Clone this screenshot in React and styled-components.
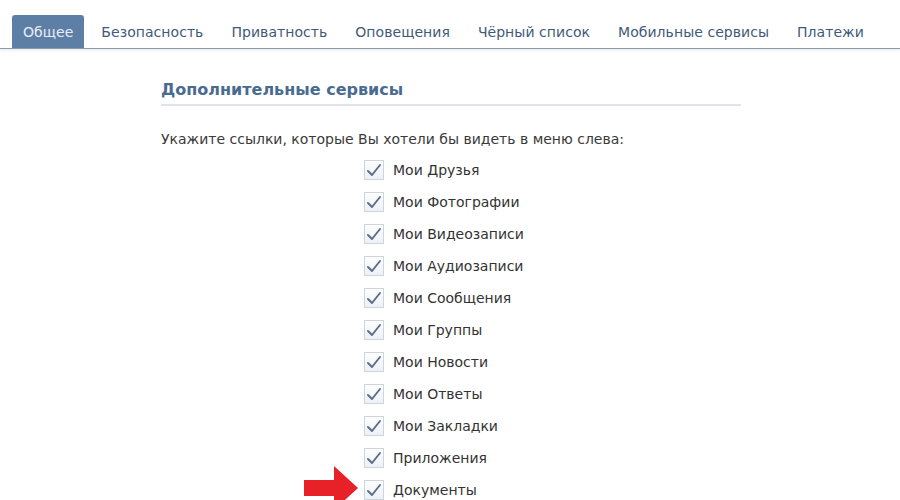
import React from "react";
import styled, { createGlobalStyle } from "styled-components";

const GlobalStyle = createGlobalStyle`
  body {
    margin: 0;
    background: #fff;
    font-family: "DejaVu Sans", Tahoma, sans-serif;
    overflow: hidden;
  }
`;

const Page = styled.div`
  width: 900px;
  height: 500px;
  overflow: hidden;
  background: #fff;
`;

const TabBar = styled.div`
  display: flex;
  align-items: flex-end;
  padding: 15px 0 0 12px;
  border-bottom: 1px solid #8c99a8;
  box-shadow: 0 2px 2px #eef0f2;
`;

const Tab = styled.div`
  height: 33px;
  display: flex;
  align-items: center;
  padding: 0 ${props => (props.active ? "11px" : "14px")};
  margin-right: ${props => (props.active ? "3px" : "0")};
  font-size: 14px;
  letter-spacing: 0.05px;
  color: ${props => (props.active ? "#e8eef5" : "#3f5a78")};
  background: ${props => (props.active ? "#5d7fa5" : "transparent")};
  border-radius: 3px 3px 0 0;
`;

const Content = styled.div`
  width: 580px;
  margin-left: 161px;
  padding-top: 31px;
`;

const Heading = styled.div`
  font-size: 16px;
  font-weight: bold;
  color: #4a6b90;
  padding-bottom: 5px;
  border-bottom: 2px solid #dfe4ea;
`;

const Hint = styled.div`
  margin-top: 25px;
  font-size: 14px;
  color: #3a3a3a;
`;

const List = styled.div`
  display: flex;
  flex-direction: column;
  margin-top: 7px;
  margin-left: 203px;
`;

const Row = styled.div`
  position: relative;
  display: flex;
  align-items: center;
  height: 32px;
  font-size: 14px;
  color: #333;
`;

const Box = styled.div`
  width: 18px;
  height: 18px;
  border: 1px solid #ccd4dc;
  background: linear-gradient(#fdfdfd, #eef1f4);
  margin-right: 9px;
  display: flex;
  align-items: center;
  justify-content: center;
`;

const Arrow = styled.svg`
  position: absolute;
  left: -60px;
  top: -8px;
`;

const tabs = [
  "Общее",
  "Безопасность",
  "Приватность",
  "Оповещения",
  "Чёрный список",
  "Мобильные сервисы",
  "Платежи",
];

const items = [
  "Мои Друзья",
  "Мои Фотографии",
  "Мои Видеозаписи",
  "Мои Аудиозаписи",
  "Мои Сообщения",
  "Мои Группы",
  "Мои Новости",
  "Мои Ответы",
  "Мои Закладки",
  "Приложения",
  "Документы",
];

const Check = () => (
  <svg width="16" height="14" viewBox="0 0 16 14">
    <path
      d="M2 8 L6 12 L14 2"
      fill="none"
      stroke="#5a708a"
      strokeWidth="2"
      strokeLinecap="round"
      strokeLinejoin="round"
    />
  </svg>
);

const App = () => (
  <Page>
    <GlobalStyle />
    <TabBar>
      {tabs.map((t, i) => (
        <Tab key={t} active={i === 0}>
          {t}
        </Tab>
      ))}
    </TabBar>
    <Content>
      <Heading>Дополнительные сервисы</Heading>
      <Hint>Укажите ссылки, которые Вы хотели бы видеть в меню слева:</Hint>
      <List>
        {items.map((it, i) => (
          <Row key={it}>
            {i === items.length - 1 && (
              <Arrow width="56" height="42" viewBox="0 0 56 42">
                <path d="M0 14 H30 V0 L54 22 L30 44 V30 H0 Z" fill="#e82128" />
              </Arrow>
            )}
            <Box>
              <Check />
            </Box>
            {it}
          </Row>
        ))}
      </List>
    </Content>
  </Page>
);

export default App;
